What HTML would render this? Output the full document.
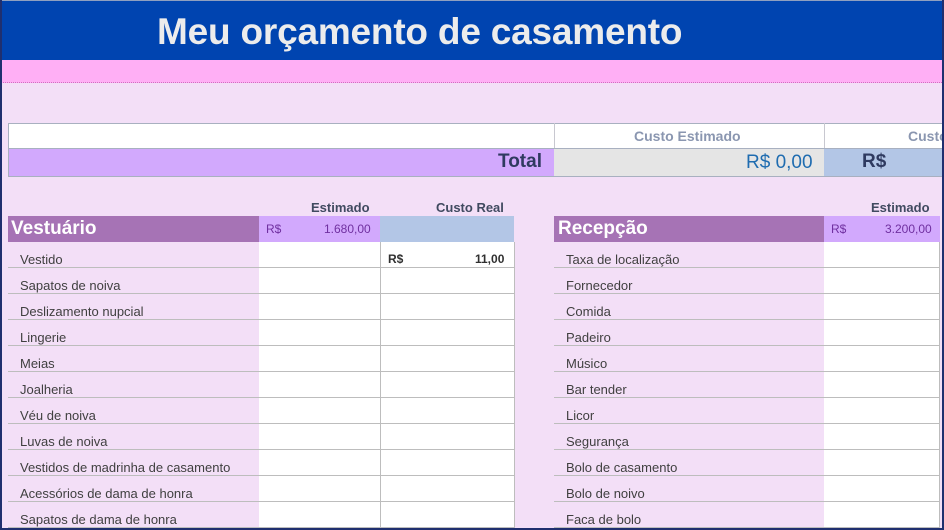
<!DOCTYPE html>
<html><head><meta charset="utf-8"><style>
*{margin:0;padding:0;box-sizing:border-box}
body{width:944px;height:530px;overflow:hidden;background:#f3dff7;font-family:"Liberation Sans",sans-serif;position:relative}
.a{position:absolute}
.hdr{left:0;top:0;width:944px;height:60px;background:#0044b0;border-top:1px solid #8fa0c0}
.title{left:157px;top:11px;font-size:37px;font-weight:bold;color:#ececec;letter-spacing:-0.2px}
.pink{left:0;top:60px;width:944px;height:23px;background:#ffaff5;border-bottom:1px dotted #d070c0}
.frame{left:0;top:0;width:944px;height:530px;border-left:2px solid #1f2f6f;border-right:2px solid #1f2f6f;border-bottom:2px solid #1f2f6f}
.t{font-size:13px;color:#404040}
.row{position:absolute;height:26px;border-bottom:1px solid #bdbdbd}
.cell{position:absolute;background:#fff;border-right:1px solid #bdbdbd;border-bottom:1px solid #bdbdbd;height:26px}
.hd{font-size:13px;font-weight:bold;color:#404a60}
</style></head><body>
<div class="a hdr"></div>
<div class="a title">Meu orçamento de casamento</div>
<div class="a pink"></div>
<div class="a" style="left:8px;top:123px;width:936px;height:54px;border:1px solid #a8b0c0;background:#fff"></div>
<div class="a" style="left:554px;top:123px;width:1px;height:26px;background:#c8c8d0"></div>
<div class="a" style="left:824px;top:123px;width:1px;height:26px;background:#c8c8d0"></div>
<div class="a" style="left:634px;top:128px;font-size:14px;font-weight:bold;color:#8a96b0">Custo Estimado</div>
<div class="a" style="left:908px;top:128px;font-size:14px;font-weight:bold;color:#8a96b0">Custo</div>
<div class="a" style="left:9px;top:149px;width:545px;height:27px;background:#d2a9fd"></div>
<div class="a" style="left:554px;top:149px;width:270px;height:27px;background:#e5e5e5"></div>
<div class="a" style="left:824px;top:149px;width:120px;height:27px;background:#b3c6e6"></div>
<div class="a" style="left:9px;top:148px;width:935px;height:1px;background:#a8b0c0"></div>
<div class="a" style="left:498px;top:151px;font-size:19px;font-weight:bold;color:#2f3a60">Total</div>
<div class="a" style="left:746px;top:152px;font-size:19px;color:#1f6cb0">R$ 0,00</div>
<div class="a" style="left:862px;top:151px;font-size:19px;font-weight:bold;color:#2f3a60">R$</div>
<div class="a hd" style="left:311px;top:200px">Estimado</div>
<div class="a hd" style="left:436px;top:200px">Custo Real</div>
<div class="a" style="left:8px;top:216px;width:251px;height:26px;background:#a673b5"></div>
<div class="a" style="left:11px;top:218px;font-size:19px;font-weight:bold;color:#fff">Vestuário</div>
<div class="a" style="left:259px;top:216px;width:121px;height:26px;background:#d2a9fd"></div>
<div class="a" style="left:266px;top:222px;font-size:12px;color:#7030a0">R$</div>
<div class="a" style="left:324px;top:222px;font-size:12px;color:#7030a0">1.680,00</div>
<div class="a" style="left:380px;top:216px;width:134px;height:26px;background:#b3c6e6"></div>
<div class="a hd" style="left:871px;top:200px">Estimado</div>
<div class="a" style="left:554px;top:216px;width:270px;height:26px;background:#a673b5"></div>
<div class="a" style="left:558px;top:218px;font-size:19px;font-weight:bold;color:#fff">Recepção</div>
<div class="a" style="left:824px;top:216px;width:116px;height:26px;background:#d2a9fd"></div>
<div class="a" style="left:831px;top:222px;font-size:12px;color:#7030a0">R$</div>
<div class="a" style="left:885px;top:222px;font-size:12px;color:#7030a0">3.200,00</div>
<div id="rows"></div>
<script>
var L=["Vestido","Sapatos de noiva","Deslizamento nupcial","Lingerie","Meias","Joalheria","Véu de noiva","Luvas de noiva","Vestidos de madrinha de casamento","Acessórios de dama de honra","Sapatos de dama de honra"];
var R=["Taxa de localização","Fornecedor","Comida","Padeiro","Músico","Bar tender","Licor","Segurança","Bolo de casamento","Bolo de noivo","Faca de bolo"];
var h="";
for(var i=0;i<11;i++){var y=242+i*26;
h+='<div class="row" style="left:8px;top:'+y+'px;width:251px"></div>';
h+='<div class="cell" style="left:259px;top:'+y+'px;width:122px"></div>';
h+='<div class="cell" style="left:381px;top:'+y+'px;width:134px"></div>';
h+='<div class="a t" style="left:20px;top:'+(y+10)+'px">'+L[i]+'</div>';
h+='<div class="row" style="left:554px;top:'+y+'px;width:270px"></div>';
h+='<div class="cell" style="left:824px;top:'+y+'px;width:116px"></div>';
h+='<div class="a t" style="left:566px;top:'+(y+10)+'px">'+R[i]+'</div>';}
h+='<div class="a" style="left:388px;top:252px;font-size:12px;font-weight:bold;color:#303030">R$</div><div class="a" style="left:475px;top:252px;font-size:12px;font-weight:bold;color:#303030">11,00</div>';
document.getElementById("rows").innerHTML=h;
</script>
<div class="a frame"></div>
</body></html>
